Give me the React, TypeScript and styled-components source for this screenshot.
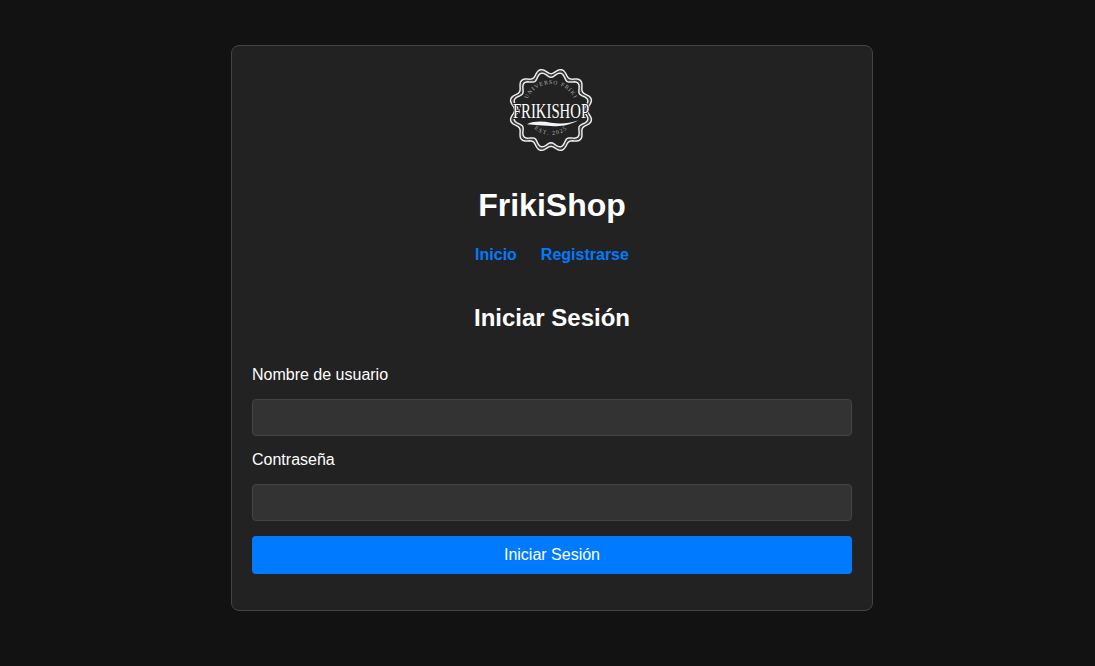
import React from "react";
import styled, { createGlobalStyle } from "styled-components";

const GlobalStyle = createGlobalStyle`
  html, body {
    margin: 0;
    padding: 0;
    background: #121212;
    color: #fff;
    font-family: "Liberation Sans", Arial, sans-serif;
  }
`;

const Page = styled.div`
  min-height: 666px;
  padding-top: 45px;
  box-sizing: border-box;
`;

const Card = styled.main`
  width: 642px;
  height: 566px;
  box-sizing: border-box;
  margin: 0 0 0 231px;
  padding: 20px;
  background: #222;
  border: 1px solid #444;
  border-radius: 8px;
`;

const Header = styled.header`
  display: flex;
  flex-direction: column;
  align-items: center;
`;

const LogoWrap = styled.div`
  width: 88px;
  height: 88px;
  margin-left: -2px;
`;

const Title = styled.h1`
  margin: 33px 0 0;
  font-size: 32px;
  line-height: 37px;
  font-weight: 700;
  color: #fff;
`;

const Nav = styled.nav`
  display: flex;
  gap: 24px;
  margin-top: 22px;
`;

const NavLink = styled.a`
  font-size: 16px;
  line-height: 18px;
  font-weight: 700;
  color: #007bff;
  text-decoration: none;
`;

const Heading = styled.h2`
  margin: 40px 0 0;
  font-size: 24px;
  line-height: 28px;
  font-weight: 700;
  text-align: center;
  color: #fff;
`;

const Form = styled.form`
  display: flex;
  flex-direction: column;
  margin-top: 34px;
`;

const Label = styled.label`
  font-size: 16px;
  line-height: 18px;
  color: #fff;
  margin-bottom: 15px;
`;

const Input = styled.input`
  height: 37px;
  box-sizing: border-box;
  margin-bottom: 15px;
  padding: 10px;
  background: #333;
  border: 1px solid #444;
  border-radius: 4px;
  color: #fff;
  font-size: 16px;
  outline: none;
`;

const Submit = styled.button`
  height: 38px;
  background: #007bff;
  border: 0;
  border-radius: 4px;
  color: #fff;
  font-family: inherit;
  font-size: 16px;
  cursor: pointer;
`;

// wavy seal outline, radius r, n lobes (valley at 12 o'clock)
const sealPath = (r: number, amp: number, n = 12) => {
  const pts: string[] = [];
  const steps = n * 12;
  for (let i = 0; i <= steps; i++) {
    const a = (i / steps) * Math.PI * 2;
    const rad = r - amp * Math.cos(n * a);
    const x = 44 + rad * Math.sin(a);
    const y = 44 - rad * Math.cos(a);
    pts.push(`${i === 0 ? "M" : "L"}${x.toFixed(2)} ${y.toFixed(2)}`);
  }
  return pts.join(" ") + "Z";
};

const Logo: React.FC = () => (
  <svg width="88" height="88" viewBox="0 0 88 88" fill="none">
    <defs>
      <path id="sealTop" d="M18 44 A26 26 0 0 1 70 44" />
      <path id="sealBottom" d="M19 44 A25 25 0 0 0 69 44" />
    </defs>
    <path d={sealPath(39, 2.7)} stroke="#ececec" strokeWidth="1.5" />
    <path d={sealPath(37.2, 2.7)} stroke="#555" strokeWidth="0.7" />
    <path d={sealPath(35.4, 2.7)} stroke="#ececec" strokeWidth="1.5" />
    <text fill="#b4b4b4" fontFamily="'Liberation Serif', serif" fontSize="5.6" letterSpacing="1">
      <textPath href="#sealTop" startOffset="50%" textAnchor="middle">UNIVERSO FRIKI</textPath>
    </text>
    <text fill="#b4b4b4" fontFamily="'Liberation Serif', serif" fontSize="6" letterSpacing="1.3">
      <textPath href="#sealBottom" startOffset="50%" textAnchor="middle">EST. 2025</textPath>
    </text>
    <text
      transform="translate(44 52) scale(0.67 1)"
      textAnchor="middle"
      fill="#fff"
      stroke="#222"
      strokeWidth="2"
      paintOrder="stroke"
      fontFamily="'Liberation Serif', serif"
      fontSize="22"
    >
      FRIKISHOP
    </text>
    <path d="M20 58.2 C28 54.6 36 55.4 44 56.8 C54 58 62 57.5 71 54.6 C62 59.6 54 60.8 44 60 C36 59.6 28 59 20 58.2Z" fill="#f4f4f4" />
  </svg>
);

const App: React.FC = () => (
  <>
    <GlobalStyle />
    <Page>
      <Card>
        <Header>
          <LogoWrap>
            <Logo />
          </LogoWrap>
          <Title>FrikiShop</Title>
          <Nav>
            <NavLink href="#">Inicio</NavLink>
            <NavLink href="#">Registrarse</NavLink>
          </Nav>
        </Header>
        <Heading>Iniciar Sesión</Heading>
        <Form onSubmit={(e) => e.preventDefault()}>
          <Label htmlFor="username">Nombre de usuario</Label>
          <Input id="username" type="text" />
          <Label htmlFor="password">Contraseña</Label>
          <Input id="password" type="password" />
          <Submit type="submit">Iniciar Sesión</Submit>
        </Form>
      </Card>
    </Page>
  </>
);

export default App;
